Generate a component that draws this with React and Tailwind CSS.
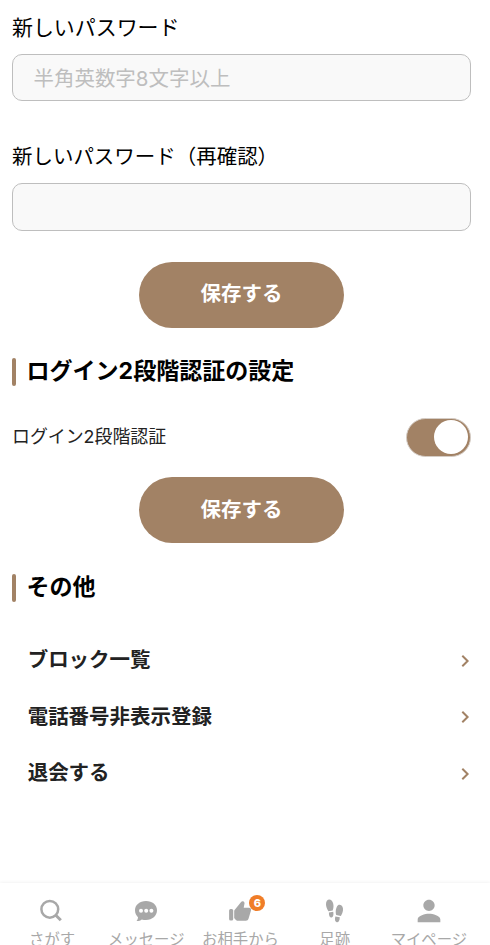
import React, { useState } from "react";
import { MdPerson } from "react-icons/md";

const menuItems = ["ブロック一覧", "電話番号非表示登録", "退会する"];

function SearchIcon() {
  return (
    <svg className="size-7" viewBox="0 0 28 28" fill="none" stroke="currentColor" strokeWidth="2.5">
      <circle cx="11.8" cy="12.3" r="8.4" />
      <path d="M17.8 18.2l5 5" strokeWidth="3" />
    </svg>
  );
}

function MessageIcon() {
  return (
    <svg className="size-7" viewBox="0 0 28 28" fill="currentColor">
      <path d="M14 4C7.7 4 3 8 3 13.3c0 3.2 1.3 5.3 3 6.9 0 1.5-.6 2.8-1.5 3.8 2 .1 4-.5 5.3-1.6 1.3.4 2.7.6 4.2.6 6.3 0 11-4.2 11-9.7S20.3 4 14 4z" />
      <g fill="#fff">
        <circle cx="9" cy="13.7" r="2" />
        <circle cx="14.2" cy="13.7" r="2" />
        <circle cx="19.4" cy="13.7" r="2" />
      </g>
    </svg>
  );
}

function LikeIcon() {
  return (
    <svg className="size-7" viewBox="0 0 28 28" fill="currentColor">
      <rect x="3.1" y="12" width="4.1" height="11.5" rx="1.5" />
      <path d="M9 12.4L15.3 4.700c.6-.7 1.700-.7 2.300-.2.700.5 1.100 1.300.9 2.100L17.700 10.800h5.300c1.500 0 2.400 1.300 2 2.700l-2.500 8.300c-.4 1.300-1.300 2-2.600 2h-7.400c-1 0-1.900-.3-2.600-.9L8.600 21.500c-.3-.2-.4-.5-.4-.8v-6.600c0-.6.300-1.200.8-1.700z" />
    </svg>
  );
}

function FootprintsIcon() {
  return (
    <svg className="size-7" viewBox="0 0 28 28" fill="currentColor">
      <path d="M8.4 2.500c2.400 0 4.100 3 4.100 6.500 0 2-.4 3.200-.8 4.500l-4.300.7C6 11.700 5 9.600 5 7.200 5 4.500 6.300 2.500 8.400 2.500z" />
      <path d="M7.900 15.400l4.300-.7c.6 2.700.1 5.300-1.500 5.700C8.900 20.700 7.700 18.700 7.900 15.400z" />
      <path d="M18.700 7.700c2.300.3 3.700 2.700 3.300 5.500-.3 2.100-1 3.800-2.100 5.700l-4.700-.8c-.4-1.400-.6-2.700-.4-4.500.4-3.400 1.800-6.200 3.900-5.900z" />
      <path d="M14.300 19.500l4.500.7c-.1 3.500-1.400 5.300-3.100 5-1.700-.3-2.100-2.600-1.400-5.700z" />
    </svg>
  );
}

const navItems = [
  { label: "さがす", icon: <SearchIcon /> },
  { label: "メッセージ", icon: <MessageIcon /> },
  { label: "お相手から", icon: <LikeIcon />, badge: 6 },
  { label: "足跡", icon: <FootprintsIcon /> },
  { label: "マイページ", icon: <MdPerson className="-m-[3px] size-[34px]" /> },
];

function SaveButton({ className = "" }) {
  return (
    <button
      className={`block h-[66px] w-[205px] rounded-full bg-[#a28265] text-[20.48px] font-bold text-white ${className}`}
    >
      保存する
    </button>
  );
}

function SectionTitle({ children }) {
  return (
    <div className="flex h-7 items-center">
      <span className="h-7 w-1 rounded-full bg-[#a28265]" />
      <h2 className="ml-[10.5px] pb-0.5 text-[23.04px] leading-6 font-bold text-black">{children}</h2>
    </div>
  );
}

export default function App() {
  const [twoStep, setTwoStep] = useState(true);

  return (
    <div className="flex h-[945px] flex-col overflow-hidden bg-white font-['Inter','Noto_Sans_CJK_JP',sans-serif] text-[#222]">
      <main className="flex-1 pr-[19px] pl-3">
        <label className="block h-[54px] pt-3.5 text-[20.95px] leading-7 text-black">新しいパスワード</label>
        <input
          type="password"
          placeholder="半角英数字8文字以上"
          className="block h-[47px] w-full rounded-[10px] border border-[#bebebe] bg-[#f9f9f9] pt-px pr-5 pl-[20.5px] text-[20.48px] placeholder:text-[#bebebe]"
        />

        <label className="mt-[42px] block h-10 text-[20.48px] leading-7 text-black">新しいパスワード（再確認）</label>
        <input
          type="password"
          className="block h-12 w-full rounded-[10px] border border-[#bebebe] bg-[#f9f9f9] px-[21px] text-[20.48px]"
        />

        <div className="mt-[31px] ml-[127px]">
          <SaveButton className="pb-0.5" />
        </div>

        <div className="mt-[30px]">
          <SectionTitle>ログイン2段階認証の設定</SectionTitle>
        </div>
        <div className="mt-8 flex h-[38px] items-center justify-between">
          <span className="text-[17.92px]">ログイン2段階認証</span>
          <button
            onClick={() => setTwoStep(!twoStep)}
            className={`flex h-[39px] w-[65px] items-center rounded-full border border-[#d5cdc6] px-px ${
              twoStep ? "justify-end bg-[#a28265]" : "justify-start bg-gray-300"
            }`}
          >
            <span className="mr-px size-[34px] rounded-full bg-white" />
          </button>
        </div>

        <div className="mt-[21px] ml-[127px]">
          <SaveButton className="pb-0" />
        </div>

        <div className="mt-[31px]">
          <SectionTitle>その他</SectionTitle>
        </div>
        <ul className="mt-[29px]">
          {menuItems.map((item) => (
            <li key={item} className="flex h-[56.5px] items-center justify-between pr-px pl-[15.7px]">
              <span className="pt-[2.5px] text-[20.48px] font-bold">{item}</span>
              <svg className="mt-[3px] h-3 w-[9px]" viewBox="0 0 9 12" fill="none" stroke="#a28265" strokeWidth="2">
                <path d="M1.3 .8L6.600 6 1.300 11.200" />
              </svg>
            </li>
          ))}
        </ul>
      </main>

      <nav className="grid h-[62px] shrink-0 grid-cols-5 bg-white pr-3.5 pl-[5px] text-[#a8a8a8] shadow-[0_-1px_3px_rgba(0,0,0,0.05)]">
        {navItems.map(({ label, icon, badge }) => (
          <div key={label} className="flex flex-col items-center pt-3.5 whitespace-nowrap">
            <div className="relative size-7">
              {icon}
              {badge && (
                <span className="absolute -top-0.5 left-[23px] flex size-4 items-center justify-center rounded-full bg-[#f07d28] text-[11px] font-extrabold text-white">
                  {badge}
                </span>
              )}
            </div>
            <span className="mt-1 text-[15.36px] leading-[22px]">{label}</span>
          </div>
        ))}
      </nav>
    </div>
  );
}
